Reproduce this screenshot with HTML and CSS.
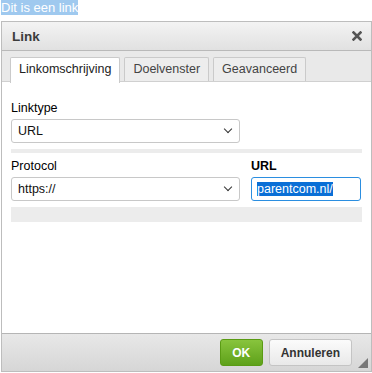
FILE: index.html
```html
<!DOCTYPE html>
<html lang="nl">
<head>
  <meta charset="UTF-8" />
  <title>Link</title>
  <link rel="stylesheet" href="styles.css">
</head>
<body>
  <p class="content"><span class="sel">Dit is een link</span></p>

  <div class="dialog">
    <div class="dialog-head">
      <span class="dialog-title">Link</span>
      <svg class="close" width="10" height="10" viewBox="0 0 10 10">
        <path d="M1.5 1.5 L8.5 8.5 M8.5 1.5 L1.5 8.5" stroke="#555" stroke-width="2.6" stroke-linecap="square" />
      </svg>
    </div>

    <div class="tabs">
      <div class="tab active">Linkomschrijving</div>
      <div class="tab">Doelvenster</div>
      <div class="tab">Geavanceerd</div>
    </div>

    <div class="dialog-body">
      <div class="field">
        <label class="lbl">Linktype</label>
        <div class="select wide">URL <span class="caret"></span></div>
      </div>
      <div class="bar"></div>

      <div class="row">
        <div class="field">
          <label class="lbl">Protocol</label>
          <div class="select wide">https:// <span class="caret"></span></div>
        </div>
        <div class="field">
          <label class="lbl bold">URL</label>
          <div class="input focus"><span class="sel-text">parentcom.nl/</span></div>
        </div>
      </div>
      <div class="bar tall"></div>
    </div>

    <div class="dialog-foot">
      <button class="btn ok">OK</button>
      <button class="btn">Annuleren</button>
      <span class="grip"></span>
    </div>
  </div>
</body>
</html>
```

FILE: styles.css
```css
body {
  margin: 0;
  font-family: "Liberation Sans", Arial, sans-serif;
  font-size: 12.5px;
  color: #000;
  background: #fff;
  overflow: hidden;
}
.content {
  margin: 0;
  height: 21px;
  font-size: 13px;
  line-height: 16px;
  padding-left: 1px;
}
.sel {
  background: #9fc9ef;
  color: #fff;
}
.dialog {
  margin-left: 1px;
  width: 369px;
  height: 349px;
  border: 1px solid #bdbdbd;
  display: flex;
  flex-direction: column;
  background: #fff;
}
.dialog-head {
  height: 28px;
  display: flex;
  align-items: center;
  justify-content: space-between;
  padding: 0 9px 0 10px;
  background: linear-gradient(#f3f3f3, #e1e1e1);
  border-bottom: 1px solid #b9b9b9;
}
.dialog-title {
  font-weight: bold;
  font-size: 13.5px;
  color: #3c3c3c;
}
.close {
  display: block;
}
.tabs {
  display: flex;
  gap: 4px;
  padding: 6px 0 0 8px;
  background: #e9e9e9;
  height: 24px;
  border-bottom: 1px solid #d0d0d0;
}
.tab {
  padding: 0 8px;
  height: 23px;
  line-height: 23px;
  border: 1px solid #cacaca;
  border-bottom: none;
  background: #ededed;
  color: #444;
  border-radius: 2px 2px 0 0;
}
.tab.active {
  background: #fff;
  color: #222;
  height: 25px;
  margin-bottom: -1px;
}
.dialog-body {
  flex: 1;
  padding: 19px 9px 0 9px;
}
.field {
  display: flex;
  flex-direction: column;
}
.lbl {
  line-height: 15px;
  margin-bottom: 3px;
}
.lbl.bold {
  font-weight: bold;
}
.select {
  box-sizing: border-box;
  height: 24px;
  border: 1px solid #c8c8c8;
  border-radius: 3px;
  padding: 0 6px;
  line-height: 22px;
  position: relative;
  color: #111;
}
.select.wide {
  width: 229px;
}
.caret {
  position: absolute;
  right: 8px;
  top: 6px;
  width: 5px;
  height: 5px;
  border-right: 1.5px solid #333;
  border-bottom: 1.5px solid #333;
  transform: rotate(45deg);
}
.bar {
  height: 4px;
  background: #ececec;
  margin: 6px 0 6px 0;
}
.bar.tall {
  height: 15px;
  margin-top: 6px;
}
.row {
  display: flex;
  gap: 11px;
}
.input {
  box-sizing: border-box;
  width: 110px;
  height: 24px;
  border: 1px solid #2b8ee0;
  border-radius: 3px;
  padding: 0 5px;
  line-height: 22px;
}
.sel-text {
  background: #0a6fd6;
  color: #fff;
}
.dialog-foot {
  height: 37px;
  border-top: 1px solid #b5b5b5;
  background: linear-gradient(#e8e8e8, #d6d6d6);
  display: flex;
  align-items: center;
  justify-content: flex-end;
  gap: 6px;
  padding-right: 19px;
  position: relative;
}
.btn {
  height: 27px;
  padding: 0 11px;
  font-family: "Liberation Sans", Arial, sans-serif;
  font-size: 12px;
  font-weight: bold;
  color: #333;
  border: 1px solid #c4c4c4;
  border-radius: 3px;
  background: linear-gradient(#fbfbfb, #e9e9e9);
}
.btn.ok {
  width: 43px;
  padding: 0;
  color: #fff;
  border-color: #5a9b14;
  background: linear-gradient(#88c43d, #5ea11a);
}
.grip {
  position: absolute;
  right: 3px;
  bottom: 3px;
  width: 0;
  height: 0;
  border-left: 10px solid transparent;
  border-bottom: 10px solid #777;
}
```
